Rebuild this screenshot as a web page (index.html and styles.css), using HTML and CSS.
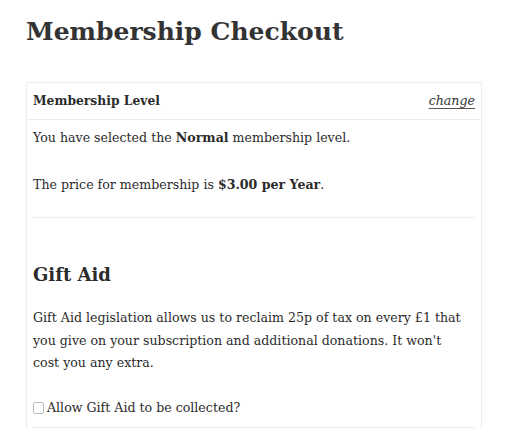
FILE: index.html
```html
<!DOCTYPE html>
<html>
<head>
<meta charset="utf-8">
<link rel="stylesheet" href="styles.css">
</head>
<body>
<div class="page">
  <h1 class="title">Membership Checkout</h1>
  <div class="box">
    <div class="box-head">
      <span class="head-label">Membership Level</span>
      <a class="change" href="#">change</a>
    </div>
    <div class="box-body">
      <p class="p1">You have selected the <strong>Normal</strong> membership level.</p>
      <p class="p2">The price for membership is <strong>$3.00 per Year</strong>.</p>
      <div class="rule rule-a"></div>
      <h2 class="gift-title">Gift Aid</h2>
      <p class="gift-text">Gift Aid legislation allows us to reclaim 25p of tax on every £1 that you give on your subscription and additional donations. It won't cost you any extra.</p>
      <label class="gift-check"><span class="cb"></span>Allow Gift Aid to be collected?</label>
      <div class="rule rule-b"></div>
    </div>
  </div>
</div>
</body>
</html>
```
FILE: styles.css
```css
html, body {
  margin: 0;
  padding: 0;
  background: #fff;
}
body {
  font-family: "DejaVu Serif", "Liberation Serif", serif;
  color: #2b2b2b;
  width: 510px;
  height: 438px;
  overflow: hidden;
}
.page {
  padding: 12px 0 0 26px;
}
.title {
  margin: 0;
  font-size: 25px;
  line-height: 40px;
  font-weight: bold;
  color: #333;
}
.box {
  margin-top: 30px;
  width: 454px;
  border: 1px solid #ececec;
  border-bottom: none;
}
.box-head {
  display: flex;
  justify-content: space-between;
  align-items: baseline;
  padding: 8px 6px;
  border-bottom: 1px solid #ececec;
  font-size: 12.3px;
  line-height: 20px;
}
.head-label {
  font-weight: bold;
}
.change {
  font-style: italic;
  color: #333;
  text-decoration: underline;
  text-decoration-color: #555;
  text-underline-offset: 3px;
  font-size: 12.6px;
}
.box-body {
  padding: 8px 6px 0 6px;
  font-size: 12.6px;
}
.box-body p {
  margin: 0;
}
.p1, .p2 {
  line-height: 20px;
}
.p2 {
  margin-top: 27px !important;
}
.rule {
  height: 1px;
  background: #ececec;
}
.rule-a {
  margin-top: 22px;
}
.gift-title {
  margin: 43px 0 0 0;
  font-size: 18px;
  line-height: 28px;
  font-weight: bold;
}
.gift-text {
  margin-top: 18px !important;
  padding-right: 12px;
  line-height: 22.5px;
}
.gift-check {
  display: flex;
  align-items: center;
  margin-top: 22.5px;
  line-height: 22.5px;
}
.cb {
  display: inline-block;
  width: 9px;
  height: 10px;
  border: 1px solid #bbb;
  border-radius: 2px;
  margin-right: 3px;
  background: #fff;
}
.rule-b {
  margin-top: 7.5px;
}
```
